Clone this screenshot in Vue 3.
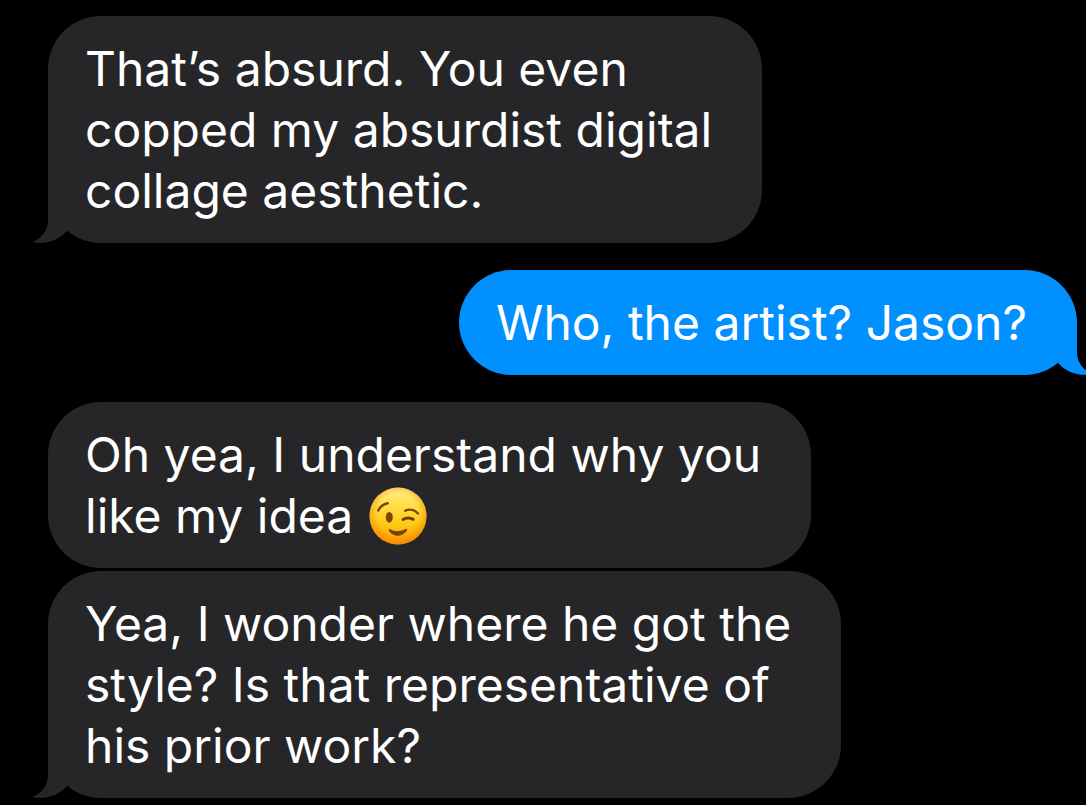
<script setup>
const messages = [
  { id: 1, side: 'in', tail: true, gap: 'first', lines: ['That’s absurd. You even', 'copped my absurdist digital', 'collage aesthetic.'] },
  { id: 2, side: 'out', tail: true, gap: 'apart', lines: ['Who, the artist? Jason?'] },
  { id: 3, side: 'in', tail: false, gap: 'apart', lines: ['Oh yea, I understand why you', 'like my idea '], wink: true },
  { id: 4, side: 'in', tail: true, gap: 'joined', lines: ['Yea, I wonder where he got the', 'style? Is that representative of', 'his prior work?'] },
]
</script>

<template>
  <main class="thread">
    <article v-for="m in messages" :key="m.id" class="bubble" :class="[m.side, m.gap]">
      <p v-for="(line, i) in m.lines" :key="i" class="line">
        <span>{{ line }}</span>
        <svg v-if="m.wink && i === m.lines.length - 1" class="emoji" viewBox="0 0 58 58" role="img" aria-label="Winking face">
          <defs>
            <linearGradient id="face" x1="0" y1="0" x2="0" y2="1">
              <stop offset="0" stop-color="#fff08a" />
              <stop offset="0.3" stop-color="#ffe04a" />
              <stop offset="0.65" stop-color="#ffc814" />
              <stop offset="1" stop-color="#ff9c08" />
            </linearGradient>
            <radialGradient id="rim" cx="0.5" cy="0.46" r="0.55">
              <stop offset="0.65" stop-color="#f58a00" stop-opacity="0" />
              <stop offset="1" stop-color="#f08000" stop-opacity="0.7" />
            </radialGradient>
          </defs>
          <circle cx="29" cy="29" r="28.5" fill="url(#face)" />
          <circle cx="29" cy="29" r="28.5" fill="url(#rim)" />
          <ellipse cx="20.3" cy="30.3" rx="3.5" ry="5.4" fill="#7a4608" />
          <path d="M9.3 23.5 Q12 17.5 18.8 16.2" fill="none" stroke="#7a4606" stroke-width="2.4" stroke-linecap="round" />
          <path d="M36.3 23.7 Q43.5 20.6 49 26.5" fill="none" stroke="#7a4606" stroke-width="2.4" stroke-linecap="round" />
          <path d="M34 32.5 Q39 29.5 44.3 32.3" fill="none" stroke="#6e3c06" stroke-width="3" stroke-linecap="round" />
          <path d="M20.5 42 Q29 46.6 37.2 41.8 Q38.8 42.2 37.8 44 Q29 53.5 20 44.2 Q19.2 42.5 20.5 42 Z" fill="#7a4208" />
        </svg>
      </p>
      <svg v-if="m.tail" class="tail" viewBox="0 0 36 54" aria-hidden="true">
        <path d="M16 0 V31 C16 42 9 50 0 53 C14 56 27 51 35 42 L20 0 Z" />
      </svg>
    </article>
  </main>
</template>

<style>
body { background: #000; overflow: hidden; }
</style>

<style scoped>
.thread {
  display: flex;
  flex-direction: column;
  align-items: flex-start;
  padding: 16px 9px 7px 48px;
  color: #fff;
  font: 400 48px/61px Inter, "Liberation Sans", sans-serif;
}
.bubble {
  position: relative;
  box-sizing: border-box;
  padding: 22px 50px 22px 37px;
  border-radius: 53px;
  background: #262628;
}
.line { margin: 0; white-space: pre; display: flex; align-items: center; }
.out { align-self: flex-end; background: #0090ff; }
.apart { margin-top: 27px; }
.joined { margin-top: 3px; }
.emoji { width: 58px; height: 58px; margin-left: 2px; }
.tail { position: absolute; left: -16px; bottom: 0; width: 36px; height: 54px; fill: #262628; }
.out .tail { left: auto; right: -16px; transform: scaleX(-1); fill: #0090ff; }
</style>
